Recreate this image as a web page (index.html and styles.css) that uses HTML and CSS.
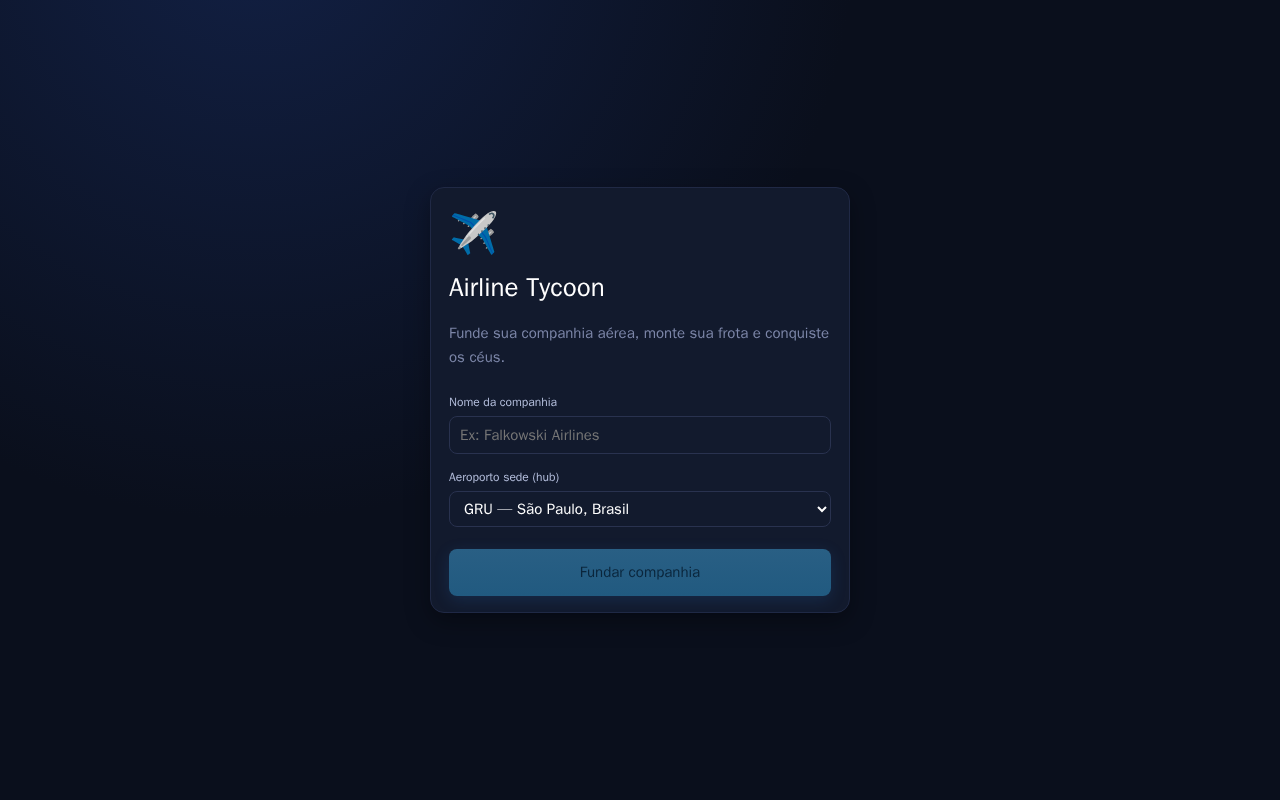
FILE: index.html
```html
<!DOCTYPE html>
<html lang="pt-BR">
<head>
<meta charset="utf-8">
<meta name="viewport" content="width=device-width, initial-scale=1">
<title>Airline Tycoon</title>
<link rel="stylesheet" href="styles.css">
</head>
<body>
<main class="setup">
  <form class="card">
    <div class="logo" aria-hidden="true">✈️</div>
    <h1 class="title">Airline Tycoon</h1>
    <p class="intro">Funde sua companhia aérea, monte sua frota e conquiste os céus.</p>
    <label class="label" for="name">Nome da companhia</label>
    <input class="field" id="name" type="text" placeholder="Ex: Falkowski Airlines">
    <label class="label" for="hub">Aeroporto sede (hub)</label>
    <select class="field" id="hub"><option>GRU — São Paulo, Brasil</option></select>
    <button class="submit" type="submit" disabled>Fundar companhia</button>
  </form>
</main>
</body>
</html>
```
FILE: styles.css
```css
* { box-sizing: border-box; }

body {
  margin: 0;
  min-height: 100vh;
  background: radial-gradient(1200px 1200px at 20% -10%, #122044 0%, #0a0f1c 50%);
  color: #fff;
  font-family: "WenQuanYi Zen Hei", "Liberation Sans", sans-serif;
  font-size: 15px;
  line-height: 24px;
}

.setup {
  min-height: 100vh;
  display: grid;
  place-items: center;
  padding: 16px;
}

.card {
  width: 100%;
  max-width: 420px;
  display: flex;
  flex-direction: column;
  padding: 16px 18px;
  background: #121a2d;
  border: 1px solid #202945;
  border-radius: 14px;
  box-shadow: 0 8px 24px rgba(0, 0, 0, 0.35);
}

.logo { font-size: 40px; line-height: 60px; }

.title {
  margin: 4px 0 13px;
  font-size: 26px;
  font-weight: 400;
  line-height: 40px;
}

.intro { margin: 0 0 23px; color: #7c86a8; }

.label {
  margin-bottom: 4px;
  color: #b4bedc;
  font-size: 12px;
  line-height: 20px;
}

.field {
  width: 100%;
  height: 38px;
  margin: 0 0 13px;
  padding: 0 10px;
  background: #121a2d;
  border: 1px solid #29324f;
  border-radius: 8px;
  color: #fff;
  font: inherit;
}

.field::placeholder { color: #757575; }

select.field { height: 36px; margin-bottom: 22px; }

.submit {
  padding: 11px 16px 12px;
  border: 0;
  border-radius: 8px;
  background: linear-gradient(#295f84, #215a80);
  box-shadow: 0 4px 16px rgba(40, 110, 190, 0.2);
  color: #0a253b;
  font: inherit;
}
```
